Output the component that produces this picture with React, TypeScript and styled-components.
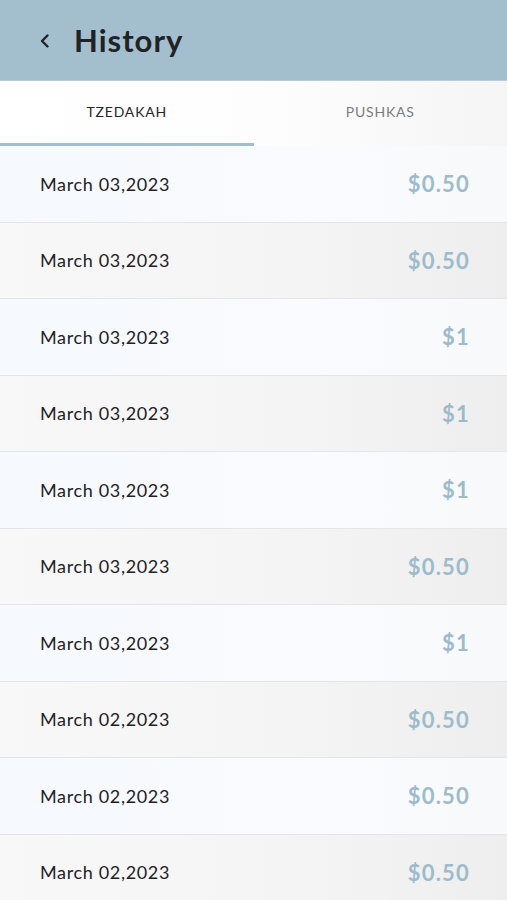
import styled, { createGlobalStyle } from 'styled-components';

const GlobalStyle = createGlobalStyle`
  html, body {
    margin: 0;
    padding: 0;
    background: #f7f9fc;
  }
  body {
    font-family: Lato, "Noto Sans", sans-serif;
  }
`;

interface Entry {
  date: string;
  amount: string;
}

const entries: Entry[] = [
  { date: 'March 03,2023', amount: '$0.50' },
  { date: 'March 03,2023', amount: '$0.50' },
  { date: 'March 03,2023', amount: '$1' },
  { date: 'March 03,2023', amount: '$1' },
  { date: 'March 03,2023', amount: '$1' },
  { date: 'March 03,2023', amount: '$0.50' },
  { date: 'March 03,2023', amount: '$1' },
  { date: 'March 02,2023', amount: '$0.50' },
  { date: 'March 02,2023', amount: '$0.50' },
  { date: 'March 02,2023', amount: '$0.50' },
];

export default function App(): JSX.Element {
  return (
    <>
      <GlobalStyle />
      <Screen>
        <Header>
          <BackButton aria-label="Back">
            <svg width="16" height="16" viewBox="0 0 16 16" fill="none">
              <path d="M10.5 2.5 5 8l5.5 5.5" stroke="#1f2326" strokeWidth="2.4" strokeLinecap="round" strokeLinejoin="round" />
            </svg>
          </BackButton>
          <Title>History</Title>
        </Header>
        <Tabs>
          <Tab active>TZEDAKAH</Tab>
          <Tab>PUSHKAS</Tab>
        </Tabs>
        <List>
          {entries.map(({ date, amount }, idx) => (
            <Row key={idx} shaded={idx % 2 === 1}>
              <DateText>{date}</DateText>
              <Amount>{amount}</Amount>
            </Row>
          ))}
        </List>
      </Screen>
    </>
  );
}

const Screen = styled.div`
  width: 507px;
  height: 900px;
  overflow: hidden;
  display: flex;
  flex-direction: column;
`;

const Header = styled.header`
  height: 81px;
  flex-shrink: 0;
  background: #a3bfcd;
  display: flex;
  align-items: center;
  gap: 18px;
  padding: 0 0 0 34px;
  box-sizing: border-box;
  border-bottom: 1px solid #b8cdd7;
`;

const BackButton = styled.button`
  border: 0;
  background: none;
  padding: 0;
  width: 22px;
  height: 22px;
  display: flex;
  align-items: center;
  justify-content: center;
  margin-top: 2px;
`;

const Title = styled.h1`
  margin: 0;
  font-size: 31px;
  font-weight: 700;
  color: #1f2326;
  letter-spacing: 1px;
`;

const Tabs = styled.nav`
  display: flex;
  height: 65px;
  flex-shrink: 0;
  background: linear-gradient(90deg, #ffffff 0%, #fdfdfd 55%, #f5f5f5 100%);
`;

const Tab = styled.div<{ active?: boolean }>`
  flex: 1;
  display: flex;
  align-items: center;
  justify-content: center;
  padding-bottom: 2px;
  font-size: 14px;
  font-weight: 400;
  letter-spacing: 0.8px;
  color: ${({ active }) => (active ? '#232628' : '#7a7d80')};
  border-bottom: 3px solid ${({ active }) => (active ? '#a3bfcd' : 'transparent')};
  box-sizing: border-box;
`;

const List = styled.div`
  display: flex;
  flex-direction: column;
`;

const Row = styled.div<{ shaded: boolean }>`
  height: 76.5px;
  flex-shrink: 0;
  box-sizing: border-box;
  display: flex;
  align-items: center;
  justify-content: space-between;
  padding: 0 38px 0 40px;
  border-bottom: 1.5px solid #e3e5e8;
  background: ${({ shaded }) =>
    shaded
      ? 'linear-gradient(90deg, #f8f8f8 0%, #f4f4f4 60%, #eeeeee 100%)'
      : 'linear-gradient(90deg, #f6f9fd 0%, #f9fbfe 60%, #f8f9fb 100%)'};
`;

const DateText = styled.span`
  font-size: 18px;
  font-weight: 400;
  color: #1f2225;
  letter-spacing: 0.65px;
`;

const Amount = styled.span`
  font-size: 22px;
  font-weight: 700;
  color: #9dbccb;
  letter-spacing: 1.2px;
  margin-right: -1px;
`;
